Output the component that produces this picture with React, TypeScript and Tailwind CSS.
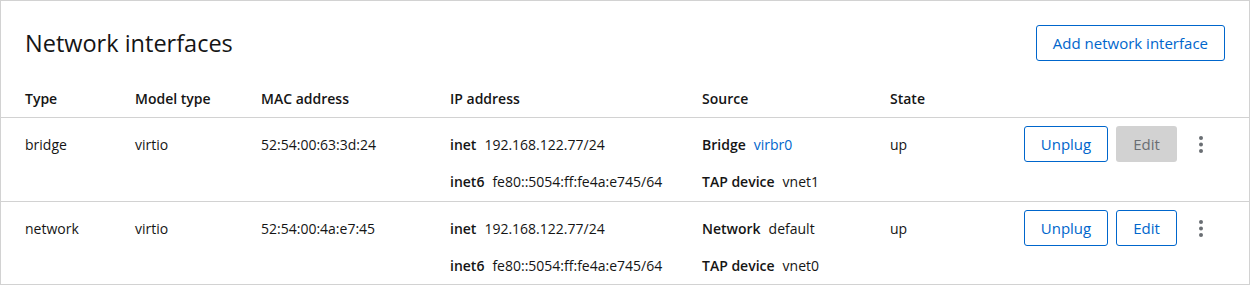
interface Iface {
  type: string;
  model: string;
  mac: string;
  inet: string;
  inet6: string;
  sourceLabel: string;
  source: string;
  sourceLink: boolean;
  tap: string;
  state: string;
  editDisabled: boolean;
}

const interfaces: Iface[] = [
  {
    type: 'bridge',
    model: 'virtio',
    mac: '52:54:00:63:3d:24',
    inet: '192.168.122.77/24',
    inet6: 'fe80::5054:ff:fe4a:e745/64',
    sourceLabel: 'Bridge',
    source: 'virbr0',
    sourceLink: true,
    tap: 'vnet1',
    state: 'up',
    editDisabled: true,
  },
  {
    type: 'network',
    model: 'virtio',
    mac: '52:54:00:4a:e7:45',
    inet: '192.168.122.77/24',
    inet6: 'fe80::5054:ff:fe4a:e745/64',
    sourceLabel: 'Network',
    source: 'default',
    sourceLink: false,
    tap: 'vnet0',
    state: 'up',
    editDisabled: false,
  },
];

const cols = 'grid grid-cols-[110px_126px_189px_252px_188px_1fr] px-6';

function Pair({ label, children }: { label: string; children: React.ReactNode }) {
  return (
    <div className="flex items-center gap-2 h-[21px]">
      <span className="font-semibold">{label}</span>
      <span>{children}</span>
    </div>
  );
}

function Kebab() {
  return (
    <svg width="4" height="17" viewBox="0 0 4 17" fill="#6a6e73">
      <circle cx="2" cy="2" r="2" />
      <circle cx="2" cy="8.5" r="2" />
      <circle cx="2" cy="15" r="2" />
    </svg>
  );
}

export default function App() {
  return (
    <div
      className="w-[1250px] h-[285px] bg-white border border-[#d2d2d2] text-[#151515] text-sm leading-[21px]"
      style={{ fontFamily: '"Open Sans", sans-serif' }}
    >
      <div className="flex items-center justify-between px-6 pt-6">
        <h2 className="text-[23.5px] leading-9 font-normal">Network interfaces</h2>
        <button className="h-9 px-4 rounded-[3px] border border-[#0066cc] text-[#0066cc] text-[15px]">
          Add network interface
        </button>
      </div>

      <div className={`${cols} pt-[27px] pb-[8px] border-b border-[#d2d2d2] font-semibold`}>
        <div>Type</div>
        <div>Model type</div>
        <div>MAC address</div>
        <div>IP address</div>
        <div>Source</div>
        <div>State</div>
      </div>

      {interfaces.map((iface, index) => (
        <div
          key={index}
          className={`${cols} pt-4 pb-[9px] ${index === 0 ? 'border-b border-[#d2d2d2]' : ''}`}
        >
          <div className="h-[21px]">{iface.type}</div>
          <div>{iface.model}</div>
          <div>{iface.mac}</div>
          <div className="flex flex-col gap-4">
            <Pair label="inet">{iface.inet}</Pair>
            <Pair label="inet6">{iface.inet6}</Pair>
          </div>
          <div className="flex flex-col gap-4">
            <Pair label={iface.sourceLabel}>
              {iface.sourceLink ? (
                <span className="text-[#0066cc]">{iface.source}</span>
              ) : (
                iface.source
              )}
            </Pair>
            <Pair label="TAP device">{iface.tap}</Pair>
          </div>
          <div className="flex items-start justify-between">
            <span>{iface.state}</span>
            <div className="flex items-center gap-[8px] -mt-[8px] mr-2">
              <button className="h-9 w-[84px] rounded-[3px] border border-[#0066cc] text-[#0066cc] text-[15px]">
                Unplug
              </button>
              {iface.editDisabled ? (
                <button
                  disabled
                  className="h-9 w-[61px] rounded-[3px] bg-[#d2d2d2] text-[#6a6e73] text-[15px]"
                >
                  Edit
                </button>
              ) : (
                <button className="h-9 w-[61px] rounded-[3px] border border-[#0066cc] text-[#0066cc] text-[15px]">
                  Edit
                </button>
              )}
              <button className="h-9 w-[32px] flex items-center justify-center">
                <Kebab />
              </button>
            </div>
          </div>
        </div>
      ))}
    </div>
  );
}
